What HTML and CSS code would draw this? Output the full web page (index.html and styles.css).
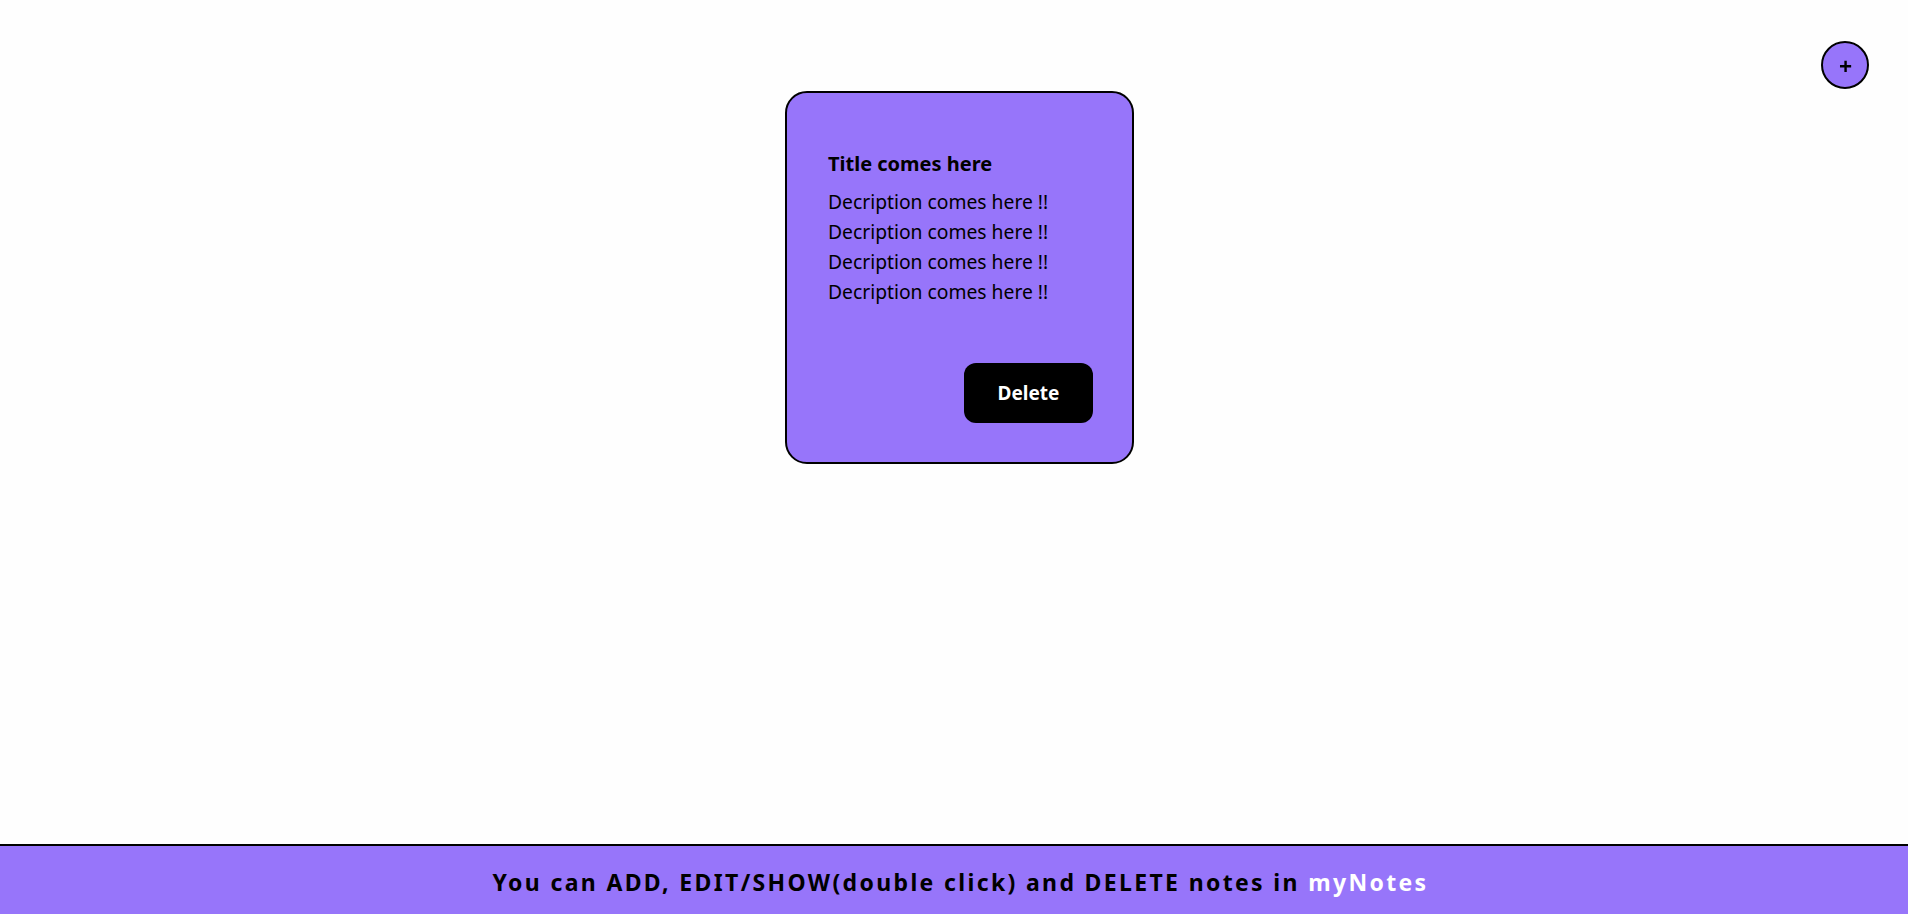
FILE: index.html
```html
<!DOCTYPE html>
<html lang="en">
<head>
<meta charset="utf-8">
<title>myNotes</title>
<link rel="stylesheet" href="styles.css">
</head>
<body>
<button class="add-btn">+</button>
<main class="notes">
  <div class="note">
    <h3 class="note-title">Title comes here</h3>
    <div class="note-desc">
      <p>Decription comes here !!</p>
      <p>Decription comes here !!</p>
      <p>Decription comes here !!</p>
      <p>Decription comes here !!</p>
    </div>
    <div class="note-actions">
      <button class="delete-btn">Delete</button>
    </div>
  </div>
</main>
<footer class="footer">
  <span>You can ADD, EDIT/SHOW(double click) and DELETE notes in <span class="brand">myNotes</span></span>
</footer>
</body>
</html>
```
FILE: styles.css
```css
* { box-sizing: border-box; }
html, body { margin: 0; padding: 0; }
body {
  font-family: "Noto Sans", "Open Sans", sans-serif;
  background: #fefefe;
  color: #000;
  height: 914px;
  overflow: hidden;
}
.add-btn {
  position: fixed;
  top: 41px;
  right: 39px;
  width: 48px;
  height: 48px;
  border-radius: 50%;
  border: 2px solid #000;
  background: #9775fa;
  font-family: "Noto Sans", sans-serif;
  font-weight: 700;
  font-size: 23px;
  line-height: 1;
  padding: 3px 0 0 1px;
  color: #000;
}
.notes {
  display: flex;
  justify-content: center;
  padding: 91px 0 0 11px;
}
.note {
  width: 349px;
  height: 373px;
  background: #9775fa;
  border: 2px solid #000;
  border-radius: 22px;
  padding: 58px 39px 39px 41px;
  display: flex;
  flex-direction: column;
}
.note-title {
  margin: 0 0 10px;
  font-size: 20px;
  font-weight: 700;
  line-height: 26px;
}
.note-desc p {
  margin: 0;
  font-size: 19.3px;
  line-height: 30px;
}
.note-actions {
  margin-top: auto;
  display: flex;
  justify-content: flex-end;
}
.delete-btn {
  width: 129px;
  height: 60px;
  border: none;
  border-radius: 12px;
  background: #000;
  color: #fff;
  font-family: "Noto Sans", sans-serif;
  font-weight: 700;
  font-size: 19px;
}
.footer {
  position: fixed;
  left: 0;
  right: 0;
  bottom: 0;
  height: 70px;
  background: #9775fa;
  border-top: 2px solid #000;
  display: flex;
  align-items: center;
  justify-content: center;
  padding: 4px 0 0 13px;
  font-weight: 700;
  font-size: 23px;
  letter-spacing: 2.35px;
  color: #000;
}
.brand { color: #fff; }
```
